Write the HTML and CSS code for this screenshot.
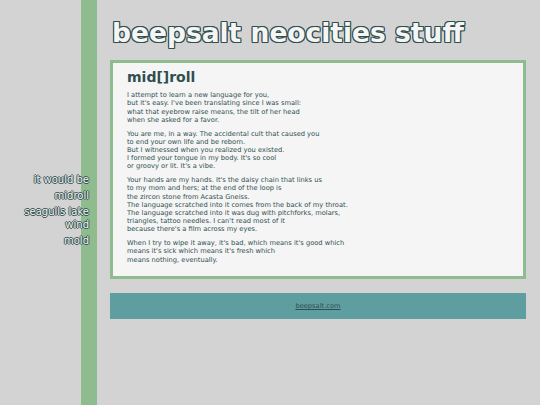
FILE: index.html
```html
<!DOCTYPE html>
<html>
<head>
<meta charset="utf-8">
<link rel="stylesheet" href="styles.css">
</head>
<body>
<div class="layout">
  <aside class="side">
    <nav class="side-nav">
      <div class="side-item">it would be</div>
      <div class="side-item">midroll</div>
      <div class="side-item">seagulls lake wind</div>
      <div class="side-item">mold</div>
    </nav>
  </aside>
  <main class="main">
    <h1 class="title">beepsalt neocities stuff</h1>
    <section class="box">
      <h2 class="box-title">mid[]roll</h2>
      <p>I attempt to learn a new language for you,<br>but it's easy. I've been translating since I was small:<br>what that eyebrow raise means, the tilt of her head<br>when she asked for a favor.</p>
      <p>You are me, in a way. The accidental cult that caused you<br>to end your own life and be reborn.<br>But I witnessed when you realized you existed.<br>I formed your tongue in my body. It's so cool<br>or groovy or lit. It's a vibe.</p>
      <p>Your hands are my hands. It's the daisy chain that links us<br>to my mom and hers; at the end of the loop is<br>the zircon stone from Acasta Gneiss.<br>The language scratched into it comes from the back of my throat.<br>The language scratched into it was dug with pitchforks, molars,<br>triangles, tattoo needles. I can't read most of it<br>because there's a film across my eyes.</p>
      <p>When I try to wipe it away, it's bad, which means it's good which<br>means it's sick which means it's fresh which<br>means nothing, eventually.</p>
    </section>
    <footer class="foot"><a class="foot-link" href="#">beepsalt.com</a></footer>
  </main>
</div>
</body>
</html>
```
FILE: styles.css
```css
html, body {
  margin: 0;
  padding: 0;
}
body {
  background: #d3d3d3;
  font-family: "DejaVu Sans", Verdana, sans-serif;
  color: #2f4f4f;
  height: 405px;
  overflow: hidden;
}
.layout {
  display: flex;
  height: 405px;
}
.side {
  width: 81px;
  flex: none;
  border-right: 16px solid #8fbc8f;
  display: flex;
  align-items: center;
  justify-content: flex-end;
}
.side-nav {
  margin-right: -8px;
  margin-top: 18px;
  width: 74px;
  flex: none;
  text-align: right;
  font-size: 10px;
  line-height: 13px;
  color: #f5f5f5;
  text-shadow: 1px 0 0 #2f4f4f, -1px 0 0 #2f4f4f, 0 1px 0 #2f4f4f, 0 -1px 0 #2f4f4f;
}
.side-item {
  margin-bottom: 3px;
}
.main {
  flex: 1;
  padding: 0 14px 0 13px;
}
.title {
  margin: 16px 0 0 2px;
  font-size: 26.5px;
  line-height: 34px;
  font-weight: bold;
  color: #f5f5f5;
  text-shadow: 1px 0 0 #2f4f4f, -1px 0 0 #2f4f4f, 0 1px 0 #2f4f4f, 0 -1px 0 #2f4f4f, 1px 1px 0 #2f4f4f, -1px -1px 0 #2f4f4f, 1px -1px 0 #2f4f4f, -1px 1px 0 #2f4f4f;
}
.box {
  margin-top: 10px;
  background: #f5f5f5;
  border: 3px solid #8fbc8f;
  padding: 5.5px 14px 7px 14px;
  font-size: 6.7px;
  line-height: 8.2px;
}
.box-title {
  margin: 0 0 5.6px 0;
  font-size: 14px;
  line-height: 17px;
  font-weight: bold;
}
.box p {
  margin: 0 0 5.6px 0;
}
.foot {
  margin-top: 14px;
  height: 26px;
  background: #5f9ea0;
  display: flex;
  align-items: center;
  justify-content: center;
}
.foot-link {
  color: #2f4f4f;
  font-size: 6.7px;
}
```
